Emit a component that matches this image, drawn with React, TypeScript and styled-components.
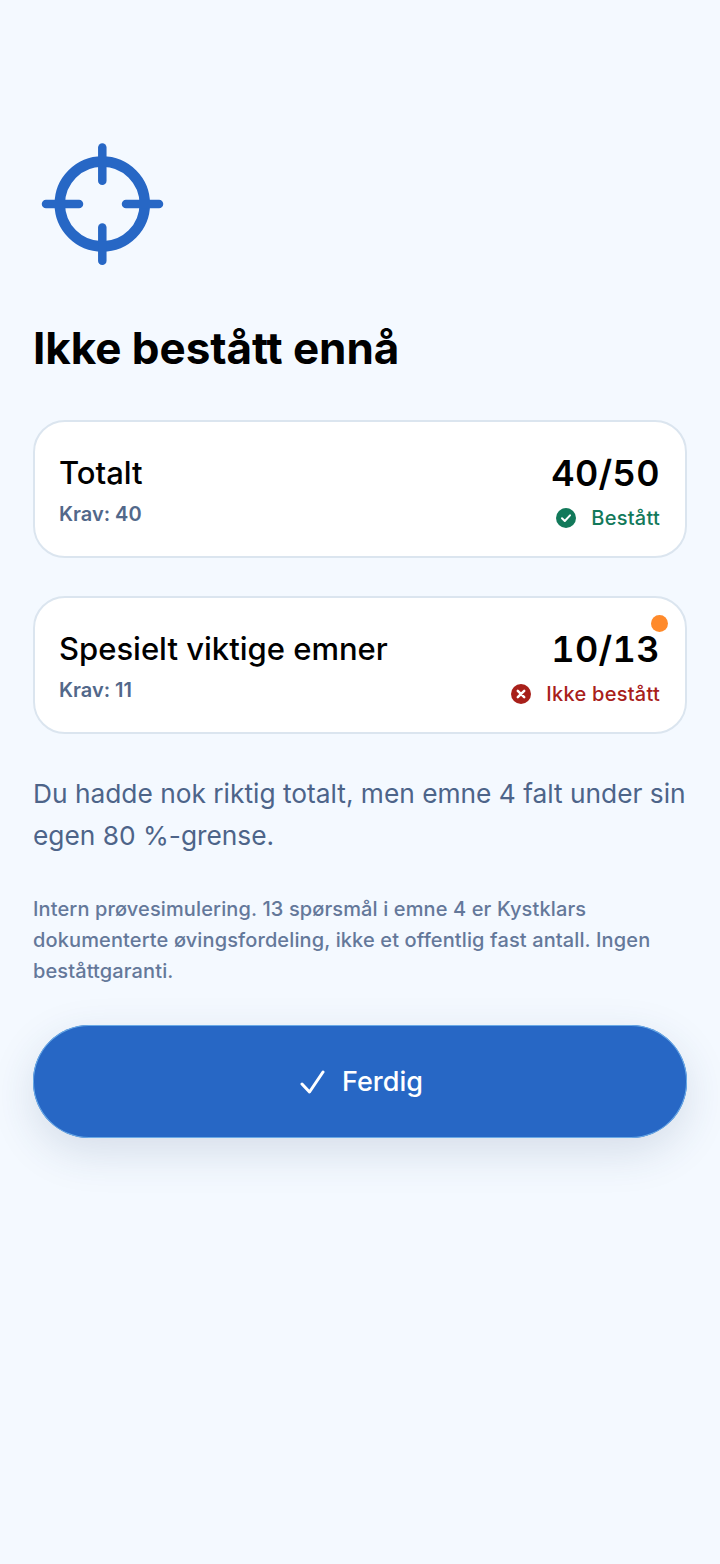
import React from "react";
import styled, { createGlobalStyle } from "styled-components";

const GlobalStyle = createGlobalStyle`
    html, body {
        margin: 0;
        padding: 0;
        background-color: #f4f9ff;
        font-family: "Inter", "Liberation Sans", sans-serif;
    }
`;

const Screen = styled.div`
    width: 720px;
    height: 1564px;
    box-sizing: border-box;
    padding: 142px 33px 0;
    display: flex;
    flex-direction: column;
    background-color: #f4f9ff;
`;

const TargetIcon = styled.svg`
    display: block;
    width: 124px;
    height: 124px;
    margin-left: 7px;
    color: #2767c5;
`;

const Title = styled.h1`
    margin: 55px 0 0;
    font-size: 44px;
    line-height: 54px;
    font-weight: 700;
    letter-spacing: -0.05px;
    color: #000;
`;

const Cards = styled.div`
    margin-top: 45px;
    display: flex;
    flex-direction: column;
    gap: 38px;
`;

const Card = styled.div`
    position: relative;
    height: 138px;
    box-sizing: border-box;
    padding: 0 25px 0 24px;
    display: flex;
    justify-content: space-between;
    background-color: #fff;
    border: 2px solid #dbe5ef;
    border-radius: 32px;
`;

const CardLeft = styled.div`
    padding-top: 31px;
`;

const CardTitle = styled.div`
    font-size: 31px;
    line-height: 40px;
    font-weight: 500;
    color: #000;
`;

const Requirement = styled.div`
    margin-top: 8px;
    font-size: 20px;
    line-height: 26px;
    font-weight: 600;
    color: #52688a;
`;

const CardRight = styled.div`
    padding-top: 28px;
    display: flex;
    flex-direction: column;
    align-items: flex-end;
`;

const Score = styled.div`
    font-size: 36px;
    line-height: 46px;
    font-weight: 600;
    letter-spacing: 0.4px;
    font-variant-numeric: tabular-nums;
    color: #000;
`;

const Status = styled.div<{ $color: string }>`
    margin-top: 9px;
    display: flex;
    align-items: center;
    gap: 15px;
    font-size: 20px;
    line-height: 26px;
    font-weight: 500;
    letter-spacing: 0.25px;
    color: ${({ $color }) => $color};
`;

const StatusIcon = styled.svg`
    display: block;
    width: 20px;
    height: 20px;
`;

const Dot = styled.span`
    position: absolute;
    top: 17px;
    right: 17px;
    width: 17px;
    height: 17px;
    border-radius: 50%;
    background-color: #ff8a2b;
`;

const Summary = styled.p`
    margin: 39px 0 0;
    font-size: 26.300px;
    line-height: 42px;
    font-weight: 400;
    color: #4d6489;
`;

const Disclaimer = styled.p`
    margin: 37px 0 0;
    font-size: 20px;
    line-height: 31px;
    font-weight: 500;
    letter-spacing: 0.12px;
    color: #64789a;
`;

const DoneButton = styled.button`
    margin-top: 38px;
    width: 654px;
    height: 113px;
    display: flex;
    align-items: center;
    justify-content: center;
    gap: 17px;
    padding: 0 0 0 3px;
    border: 0;
    border-radius: 56px;
    background-color: #2767c5;
    box-shadow: inset 0 0 0 1px #6aaae6, 0 14px 44px rgba(40, 70, 110, 0.15);
    color: #fff;
    font-family: inherit;
    font-size: 27px;
    font-weight: 500;
`;

const CheckIcon = styled.svg`
    display: block;
    width: 25px;
    height: 24px;
`;

export default function App() {
    return (
        <>
            <GlobalStyle />
            <Screen>
                <TargetIcon viewBox="0 0 124 124" fill="none" stroke="currentColor">
                    <circle cx="62.300" cy="62" r="42.500" strokeWidth="10.500" />
                    <g strokeWidth="8.500" strokeLinecap="round">
                        <path d="M62.300 5.500V38.800" />
                        <path d="M62.300 85.500V118.800" />
                        <path d="M6 62H39" />
                        <path d="M86 62H119" />
                    </g>
                </TargetIcon>
                <Title>Ikke bestått ennå</Title>
                <Cards>
                    <Card>
                        <CardLeft>
                            <CardTitle>Totalt</CardTitle>
                            <Requirement>Krav: 40</Requirement>
                        </CardLeft>
                        <CardRight>
                            <Score>40/50</Score>
                            <Status $color="#12795a">
                                <StatusIcon viewBox="0 0 20 20">
                                    <circle cx="10" cy="10" r="10" fill="currentColor" />
                                    <path d="M6 10.300 8.800 13 14 7.300" fill="none" stroke="#fff" strokeWidth="2" strokeLinecap="round" strokeLinejoin="round" />
                                </StatusIcon>
                                Bestått
                            </Status>
                        </CardRight>
                    </Card>
                    <Card>
                        <CardLeft>
                            <CardTitle>Spesielt viktige emner</CardTitle>
                            <Requirement>Krav: 11</Requirement>
                        </CardLeft>
                        <CardRight>
                            <Score>10/13</Score>
                            <Status $color="#a8201a">
                                <StatusIcon viewBox="0 0 20 20">
                                    <circle cx="10" cy="10" r="10" fill="currentColor" />
                                    <path d="M6.800 6.800 13.200 13.200M13.200 6.800 6.800 13.200" fill="none" stroke="#fff" strokeWidth="2.500" strokeLinecap="round" />
                                </StatusIcon>
                                Ikke bestått
                            </Status>
                        </CardRight>
                        <Dot />
                    </Card>
                </Cards>
                <Summary>Du hadde nok riktig totalt, men emne 4 falt under sin egen 80 %-grense.</Summary>
                <Disclaimer>
                    Intern prøvesimulering. 13 spørsmål i emne 4 er Kystklars dokumenterte øvingsfordeling, ikke et offentlig fast antall. Ingen beståttgaranti.
                </Disclaimer>
                <DoneButton>
                    <CheckIcon viewBox="0 0 25 24" fill="none" stroke="currentColor" strokeWidth="3" strokeLinecap="round" strokeLinejoin="round">
                        <path d="M2 14 9.500 22 23 2" />
                    </CheckIcon>
                    Ferdig
                </DoneButton>
            </Screen>
        </>
    );
}
